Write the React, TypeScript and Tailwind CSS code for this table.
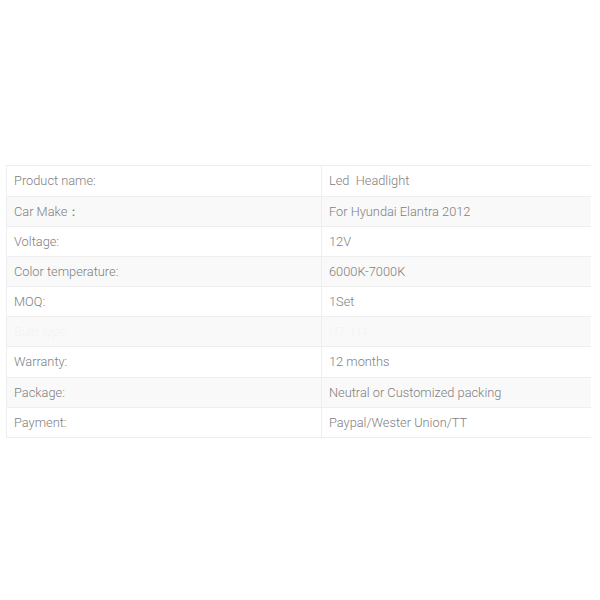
import React from "react";

const rows = [
  { label: "Product name:", value: "Led  Headlight", h: "h-[31px]" },
  { label: "Car Make\uFF1A", value: "For Hyundai Elantra 2012", h: "h-[30px]" },
  { label: "Voltage:", value: "12V", h: "h-[30px]" },
  { label: "Color temperature:", value: "6000K-7000K", h: "h-[30px]" },
  { label: "MOQ:", value: "1Set", h: "h-[30px]" },
  { label: "Bulb type:", value: "H7  H4", h: "h-[30px]", hidden: true },
  { label: "Warranty:", value: "12 months", h: "h-[31px]" },
  { label: "Package:", value: "Neutral or Customized packing", h: "h-[30px]" },
  { label: "Payment:", value: "Paypal/Wester Union/TT", h: "h-[30px]" },
];

export default function App() {
  return (
    <div className="w-[600px] h-[600px] bg-white pt-[165px] pl-[6px] font-['Roboto',sans-serif]">
      <table className="w-[585px] border-collapse text-[12.8px] font-light">
        <tbody>
          {rows.map((r, i) => (
            <tr key={r.label} className={i % 2 === 1 ? "bg-[#f9f9f9]" : "bg-white"}>
              <td
                className={`w-[315px] ${r.h} border border-[#eeeeee] pl-[7px] pr-2 py-0 align-middle ${
                  r.hidden ? "text-[#f4f4f4]" : "text-[#808080]"
                }`}
              >
                {r.label}
              </td>
              <td
                className={`${r.h} border-y border-l border-[#eeeeee] pl-[7px] pr-2 py-0 align-middle whitespace-pre ${
                  r.hidden ? "text-[#f4f4f4]" : "text-[#808080]"
                }`}
              >
                {r.value}
              </td>
            </tr>
          ))}
        </tbody>
      </table>
    </div>
  );
}
